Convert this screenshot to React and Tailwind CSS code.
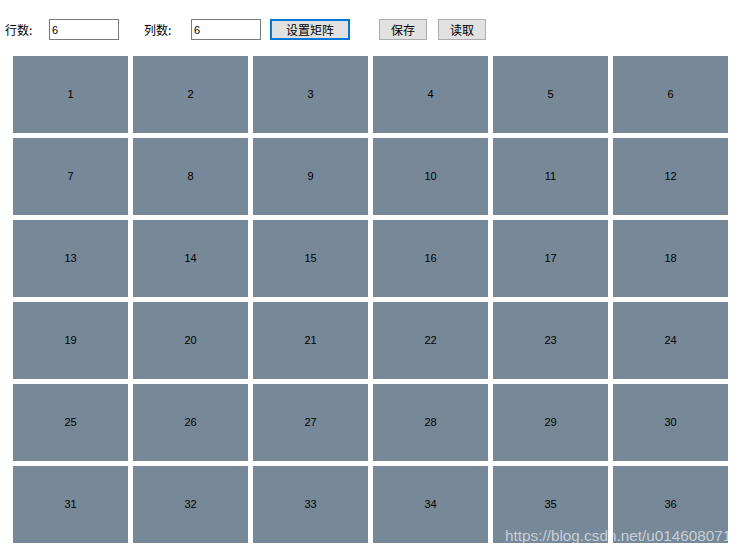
const cells = Array.from({ length: 36 }, (_, i) => i + 1)

const App = () => {
  return (
    <div
      className="relative w-[746px] h-[554px] bg-white overflow-hidden text-black"
      style={{ fontFamily: '"Liberation Sans", "Noto Sans CJK SC", sans-serif' }}
    >
      {/* Toolbar */}
      <div className="flex items-center pt-[19px] pl-[5px] h-[40px] text-[12px]">
        <span className="w-[44px]" style={{ fontFamily: '"Noto Sans CJK SC", sans-serif' }}>行数:</span>
        <input
          defaultValue="6"
          className="w-[70px] h-[21px] border border-[#7a7a7a] px-[2px] text-[11px] outline-none"
        />
        <span className="ml-[25px] w-[47px]" style={{ fontFamily: '"Noto Sans CJK SC", sans-serif' }}>列数:</span>
        <input
          defaultValue="6"
          className="w-[70px] h-[21px] border border-[#7a7a7a] px-[2px] text-[11px] outline-none"
        />
        <button
          className="ml-[9px] w-[80px] h-[21px] bg-[#e1e1e1] border-2 border-[#0078d7] text-[12px] leading-none"
          style={{ fontFamily: '"Noto Sans CJK SC", sans-serif' }}
        >
          设置矩阵
        </button>
        <button
          className="ml-[29px] w-[48px] h-[21px] bg-[#e1e1e1] border border-[#adadad] text-[12px] leading-none"
          style={{ fontFamily: '"Noto Sans CJK SC", sans-serif' }}
        >
          保存
        </button>
        <button
          className="ml-[11px] w-[48px] h-[21px] bg-[#e1e1e1] border border-[#adadad] text-[12px] leading-none"
          style={{ fontFamily: '"Noto Sans CJK SC", sans-serif' }}
        >
          读取
        </button>
      </div>

      {/* Matrix */}
      <div className="grid grid-cols-[repeat(6,115px)] auto-rows-[77px] gap-[5px] mt-[16px] ml-[13px]">
        {cells.map((n) => (
          <div key={n} className="bg-[#778899] flex items-center justify-center text-[11px]">
            {n}
          </div>
        ))}
      </div>

      {/* Watermark */}
      <div className="absolute left-[505px] top-[525px] text-[15.3px] text-white/60 whitespace-nowrap">
        https://blog.csdn.net/u014608071
      </div>
    </div>
  )
}

export default App
